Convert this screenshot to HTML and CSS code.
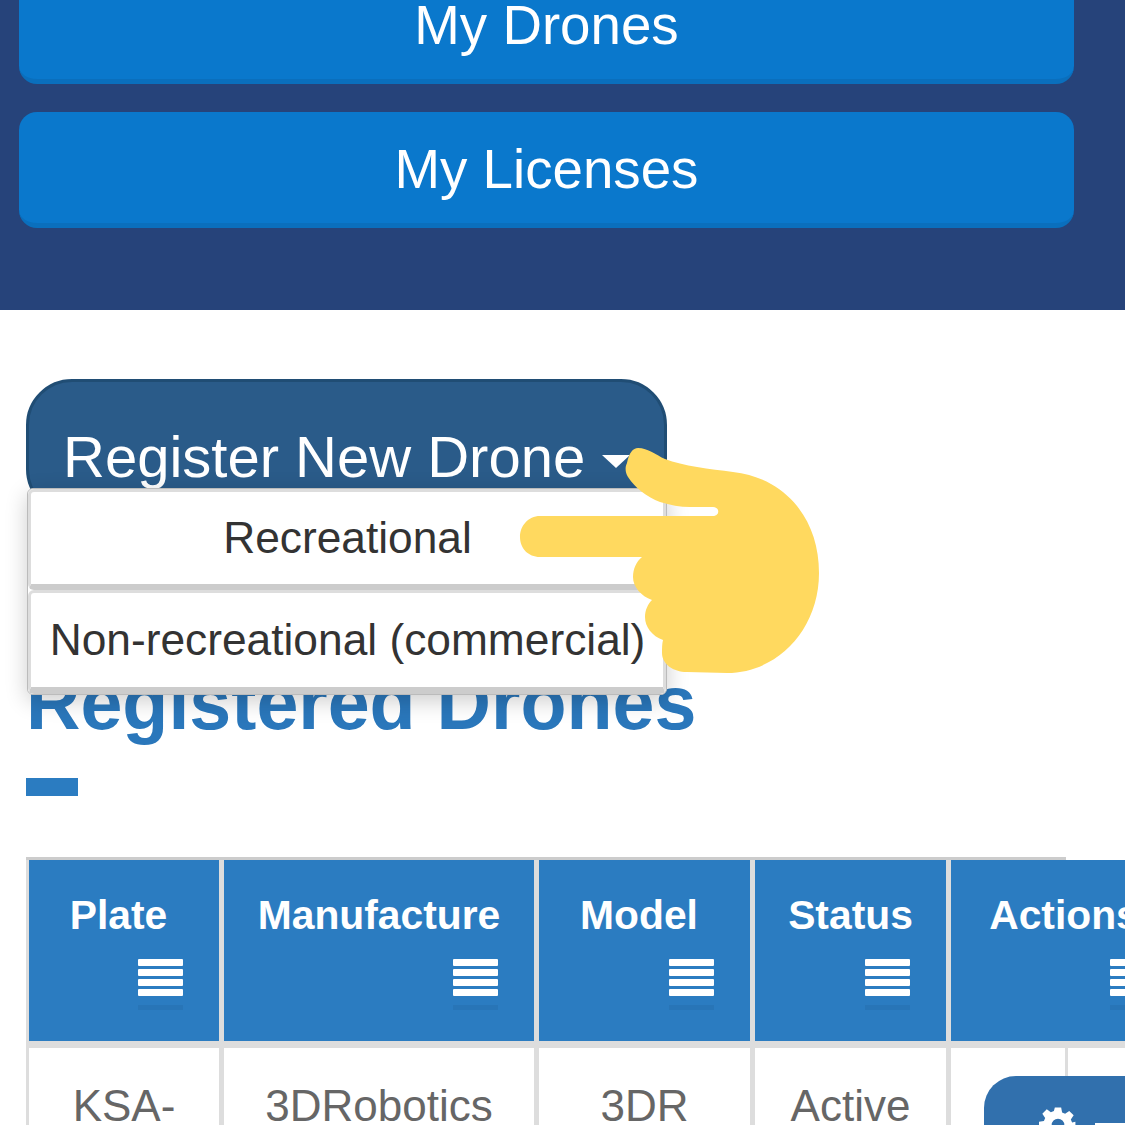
FILE: index.html
```html
<!DOCTYPE html>
<html lang="en">
<head>
  <meta charset="UTF-8">
  <title>Registered Drones</title>
  <link rel="stylesheet" href="styles.css">
</head>
<body>

  <div class="top-panel">
    <a class="panel-btn first">My Drones</a>
    <a class="panel-btn">My Licenses</a>
  </div>

  <div class="content">
    <div class="dropdown">
      <button class="register-btn">Register New Drone <span class="caret"></span></button>
      <div class="menu">
        <a class="menu-item first">Recreational</a>
        <a class="menu-item">Non-recreational (commercial)</a>
      </div>
    </div>

    <h2 class="title">Registered Drones</h2>
    <div class="title-bar"></div>

    <div class="table-wrap">
      <table class="drones">
        <thead>
          <tr>
            <th class="col-plate">Plate<span class="sort"><i></i><i></i><i></i><i></i></span></th>
            <th class="col-manu">Manufacture<span class="sort"><i></i><i></i><i></i><i></i></span></th>
            <th class="col-model">Model<span class="sort"><i></i><i></i><i></i><i></i></span></th>
            <th class="col-status">Status<span class="sort"><i></i><i></i><i></i><i></i></span></th>
            <th class="col-actions">Actions<span class="sort"><i></i><i></i><i></i><i></i></span></th>
          </tr>
        </thead>
        <tbody>
          <tr>
            <td>KSA-</td>
            <td>3DRobotics</td>
            <td>3DR</td>
            <td>Active</td>
            <td class="actions">
              <button class="action-btn">
                <svg class="gear" viewBox="0 0 24 24" width="38" height="38"><path fill="#fff" fill-rule="evenodd" d="M10 1h4l.6 3.1 1.9.8 2.6-1.8 2.8 2.8-1.8 2.6.8 1.9L23 10v4l-3.1.6-.8 1.9 1.8 2.6-2.8 2.8-2.6-1.8-1.9.8L14 23h-4l-.6-3.1-1.9-.8-2.6 1.8-2.8-2.8 1.8-2.6-.8-1.9L0 14v-4l3.1-.6.8-1.9-1.8-2.6 2.8-2.8 2.6 1.8 1.9-.8zM12 8a4 4 0 1 0 0 8 4 4 0 0 0 0-8z"/></svg>
                <span class="action-dash"></span>
              </button>
            </td>
          </tr>
        </tbody>
      </table>
    </div>
  </div>

  <!-- pointing hand drawn over the menu -->
  <svg class="hand" viewBox="0 0 310 235" width="310" height="235">
    <path fill="#ffd95f" d="M123 3 C133 3 141 10 150 14 C168 21 195 24 218 27 C232 29 244 32 256 39 C286 56 304 88 304 128 C304 185 262 228 212 228 L172 227 C158 227 147 219 147 208 C147 203 147 199 148 195 C137 191 130 182 130 172 C130 165 133 159 137 155 C126 151 118 142 118 132 C118 124 121 117 127 112 L25 112 C13 112 5 103 5 92 C5 81 13 71 25 71 L198 71 C205 71 205 62 198 62 L175 62 C165 62 155 60 145 57 C132 52 120 43 113 32 C110 27 110 22 112 18 C114 8 118 3 123 3 Z"/>
  </svg>

</body>
</html>
```

FILE: styles.css
```css
html, body {
  margin: 0;
  padding: 0;
  height: 1125px;
  overflow: hidden;
}

body {
  font-family: "Liberation Sans", Arial, sans-serif;
  background: #fff;
  color: #666;
  position: relative;
}

/* top blue panel */
.top-panel {
  background: #26437a;
  height: 310px;
  padding: 0 51px 0 19px;
  box-sizing: border-box;
  display: flex;
  flex-direction: column;
  gap: 28px;
}

.panel-btn {
  display: flex;
  align-items: center;
  justify-content: center;
  height: 116px;
  flex: none;
  box-sizing: border-box;
  background: #0a78cc;
  border-bottom: 5px solid #0a6fbd;
  border-radius: 18px;
  color: #fff;
  font-size: 54.7px;
  padding-top: 2px;
}

.panel-btn.first {
  margin-top: -32px;
}

.content {
  padding: 69px 0 0 26px;
}

/* dropdown */
.dropdown {
  position: relative;
  width: 641px;
  height: 136px;
}

.register-btn {
  display: block;
  width: 641px;
  height: 136px;
  box-sizing: border-box;
  background: #2a5b89;
  border: 3px solid #204d74;
  border-radius: 46px;
  color: #fff;
  font-family: inherit;
  font-size: 58px;
  text-align: left;
  padding: 19px 0 0 34px;
  white-space: nowrap;
}

.caret {
  display: inline-block;
  vertical-align: middle;
  margin-left: 1px;
  border-top: 13px solid #fff;
  border-left: 14px solid transparent;
  border-right: 14px solid transparent;
}

.menu {
  position: absolute;
  top: 109px;
  left: 1px;
  width: 640px;
  height: 207px;
  box-sizing: border-box;
  background: #fff;
  border: 1px solid #bbb;
  border-radius: 6px;
  box-shadow: 0 6px 22px rgba(0, 0, 0, 0.2);
}

.menu-item {
  display: flex;
  align-items: center;
  justify-content: center;
  box-sizing: border-box;
  height: 104px;
  padding-left: 1px;
  border: 3px solid #ddd;
  border-bottom: 7px solid #ccc;
  border-radius: 6px;
  background: #fff;
  color: #333;
  font-size: 44.3px;
  white-space: nowrap;
}

.menu-item.first {
  height: 101px;
  border-bottom-width: 6px;
}

.title {
  margin: 145px 0 0;
  font-size: 75.4px;
  line-height: 86px;
  color: #2a77bb;
  font-weight: bold;
  white-space: nowrap;
}

.title-bar {
  width: 52px;
  height: 18px;
  margin-top: 32px;
  background: #2b7cc1;
}

/* table */
.table-wrap {
  width: 1040px;
  margin-top: 61px;
  border-top: 3px solid #ccc;
}

.drones {
  width: 1162px;
  table-layout: fixed;
  border-collapse: separate;
  border-spacing: 0;
  border-left: 3px solid #ddd;
}

.drones th {
  box-sizing: border-box;
  height: 188px;
  padding: 32px 0 0;
  background: #2b7cc1;
  background-clip: padding-box;
  border-right: 5px solid #ddd;
  border-bottom: 7px solid #ddd;
  color: #fff;
  font-size: 40.8px;
  line-height: 46px;
  font-weight: bold;
  text-align: center;
  vertical-align: top;
}

.col-plate { width: 195px; }
.col-manu { width: 315px; }
.col-model { width: 216px; }
.col-status { width: 196px; }
.col-actions { width: 240px; }

/* these three headers sit a little left of centre */
.drones th.col-plate,
.drones th.col-model {
  padding-right: 11px;
}

.drones th.col-actions {
  padding-right: 9px;
}

.sort {
  display: flex;
  flex-direction: column;
  gap: 3px;
  width: 45px;
  margin: 21px 36px 0 auto;
  position: relative;
}

.col-plate .sort,
.col-model .sort {
  margin-right: 25px;
}

.col-actions .sort {
  margin-right: 22px;
}

.sort i {
  display: block;
  height: 7px;
  background: #fff;
  border-radius: 1px;
}

.sort::after {
  content: "";
  position: absolute;
  left: 0;
  right: 0;
  bottom: -14px;
  height: 5px;
  background: rgba(0, 0, 0, 0.05);
}

.drones td {
  box-sizing: border-box;
  height: 300px;
  padding-top: 33px;
  border-right: 5px solid #ddd;
  color: #666;
  font-size: 44px;
  line-height: 50px;
  text-align: center;
  vertical-align: top;
}

.drones td.actions {
  position: relative;
  padding: 28px 0 0 33px;
  text-align: left;
}

.drones td.actions::before {
  content: "";
  position: absolute;
  top: 0;
  left: 114px;
  width: 3px;
  height: 30px;
  background: #ddd;
}

.action-btn {
  display: block;
  position: relative;
  width: 200px;
  height: 120px;
  padding: 0;
  background: #3170ad;
  border: none;
  border-radius: 32px;
}

.gear {
  position: absolute;
  top: 30px;
  left: 55px;
}

.action-dash {
  position: absolute;
  top: 47px;
  left: 111px;
  width: 34px;
  height: 4px;
  background: #fff;
}

/* pointing hand, sits over everything */
.hand {
  position: absolute;
  top: 445px;
  left: 515px;
}
```
